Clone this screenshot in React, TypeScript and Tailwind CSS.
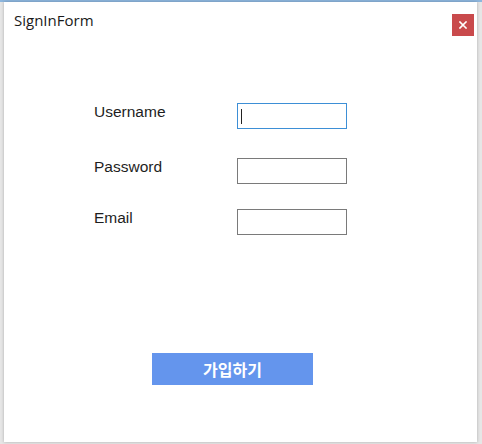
import React from "react";

export default function App() {
  return (
    <div className="w-[482px] h-[444px] bg-[#e6e6e6] flex flex-col overflow-hidden">
      <div className="h-[2px] w-full bg-[#8db6de] shrink-0" />
      <div className="flex pl-[4px]">
        <div className="w-[473px] h-[440px] bg-white flex flex-col shadow-[0_0_3px_rgba(0,0,0,0.25)]">
          <div className="flex justify-between items-start pl-[10px] pr-[3px]">
            <div
              className="mt-[8px] text-[15px] leading-[20px] text-[#1a1a1a]"
              style={{ fontFamily: '"Open Sans", "Noto Sans", sans-serif' }}
            >
              SignInForm
            </div>
            <div className="mt-[12px] w-[22px] h-[22px] bg-[#c94a4c] flex items-center justify-center">
              <svg width="8" height="8" viewBox="0 0 8 8">
                <path d="M1 1 L7 7 M7 1 L1 7" stroke="#ffffff" strokeWidth="1.6" strokeLinecap="square" />
              </svg>
            </div>
          </div>

          <div
            className="flex flex-col pl-[90px] text-[15.5px] leading-[18px] text-[#1e1e1e]"
            style={{ fontFamily: '"Liberation Sans", Arial, sans-serif' }}
          >
            <div className="flex items-start mt-[67px]">
              <div className="w-[143px]">Username</div>
              <div className="w-[110px] h-[26px] border border-[#3d8fd6] flex items-center pl-[3px]">
                <span className="w-[1px] h-[15px] bg-[#222]" />
              </div>
            </div>
            <div className="flex items-start mt-[29px]">
              <div className="w-[143px]">Password</div>
              <div className="w-[110px] h-[26px] border border-[#7a7a7a]" />
            </div>
            <div className="flex items-start mt-[25px]">
              <div className="w-[143px]">Email</div>
              <div className="w-[110px] h-[26px] border border-[#7a7a7a]" />
            </div>
          </div>

          <div className="flex pl-[148px] mt-[118px]">
            <div
              className="w-[161px] h-[32px] bg-[#6495ed] flex items-center justify-center text-white font-bold text-[16px]"
              style={{ fontFamily: '"Noto Sans CJK KR", "Noto Sans", sans-serif' }}
            >
              가입하기
            </div>
          </div>
        </div>
      </div>
    </div>
  );
}
